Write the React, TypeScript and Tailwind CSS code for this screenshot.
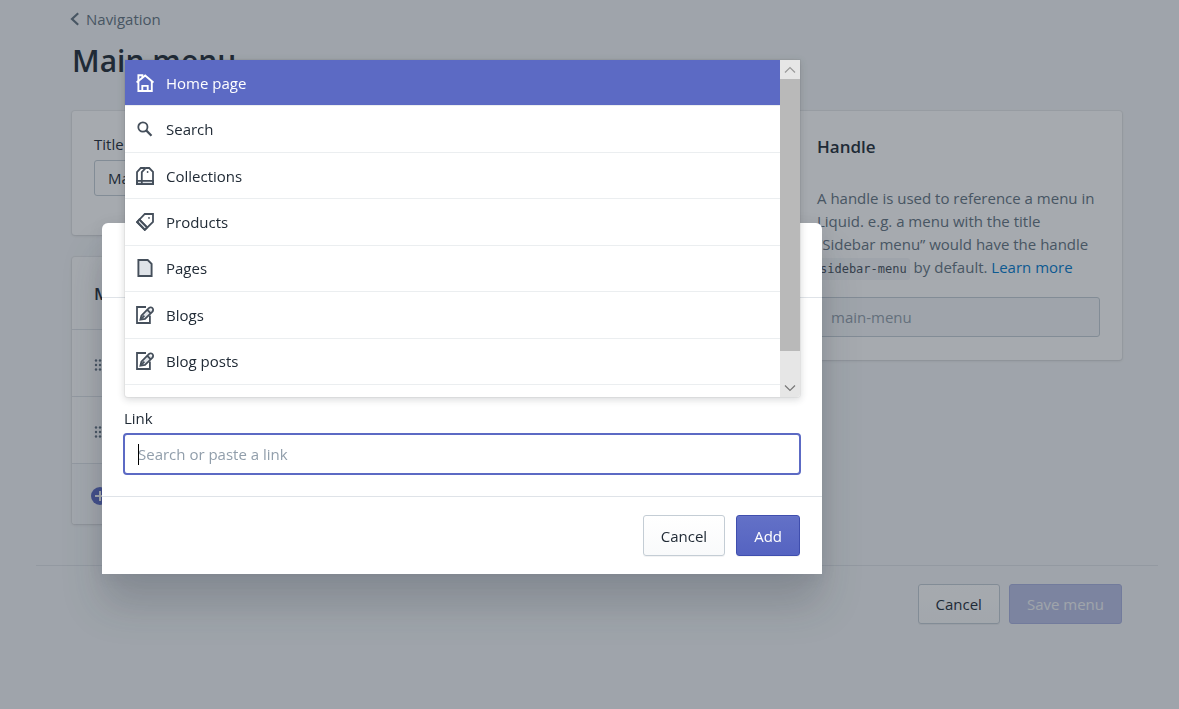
import { useState } from "react";
import type { ReactNode } from "react";

type LinkOption = {
  id: string;
  label: string;
  icon: ReactNode;
};

const HomeIcon = (
  <g fill="none" stroke="currentColor" strokeWidth="1.9">
    <path d="M2.4 7v10h13.4V7" />
    <path d="M.6 8.6 9.2 1.5l8.2 7.1" />
    <path d="M2.4 7V1.2h4v2.4" />
    <path d="M6.3 17v-5.1h5.4V17" />
  </g>
);

const SearchIcon = (
  <g fill="none" stroke="currentColor" strokeWidth="1.8">
    <circle cx="6.9" cy="7" r="4.6" />
    <path d="m10.2 10.4 5.3 5.3" strokeWidth="2.2" />
  </g>
);

const CollectionsIcon = (
  <g stroke="currentColor" strokeWidth="1.8" fill="none">
    <path d="M1 13.8h16v3.3H1z" fill="#dfe3e8" />
    <path d="M5.8 17.1V5.2L9.8 1h3.4L17 4.8v12.3z" />
    <path d="M5.8 17.1H1V5.2L4.8 1H9" />
    <circle cx="11.6" cy="5" r=".9" fill="currentColor" stroke="none" />
  </g>
);

const ProductsIcon = (
  <g stroke="currentColor" strokeWidth="1.8" fill="none">
    <path d="m3.4 6.4 7.8 8-2.4 2.4L1.1 9z" fill="#dfe3e8" />
    <path d="M1.1 9 8.8 1H17v7.9l-8.2 8z" />
    <path d="m3.3 6.6 8 8" />
    <circle cx="13" cy="4.9" r=".9" fill="currentColor" stroke="none" />
  </g>
);

const PagesIcon = (
  <path
    d="M2.4 1h9.3l3.9 3.9V17H2.4z"
    fill="#dfe3e8"
    stroke="currentColor"
    strokeWidth="1.9"
  />
);

const BlogIcon = (
  <g stroke="currentColor" strokeWidth="1.8" fill="none">
    <path d="M10 1H1v16h12.9V9.6" />
    <path d="m4.4 13.6 1-4 6.9-7c1.3-1.4 3-1.6 4.1-.5s.9 2.8-.4 4.1l-7 6.6z" fill="#dfe3e8" />
    <path d="m11.2 3.8 3.4 3.4M4.6 13.4 8.4 9.6" />
    <circle cx="15" cy="3.3" r=".9" fill="#fff" stroke="none" />
  </g>
);

const LINK_OPTIONS: LinkOption[] = [
  { id: "home", label: "Home page", icon: HomeIcon },
  { id: "search", label: "Search", icon: SearchIcon },
  { id: "collections", label: "Collections", icon: CollectionsIcon },
  { id: "products", label: "Products", icon: ProductsIcon },
  { id: "pages", label: "Pages", icon: PagesIcon },
  { id: "blogs", label: "Blogs", icon: BlogIcon },
  { id: "blog-posts", label: "Blog posts", icon: BlogIcon },
];

const CARD =
  "rounded-[3px] bg-white shadow-[0_0_0_1px_rgba(63,63,68,0.05),0_1px_3px_0_rgba(63,63,68,0.15)]";

const BUTTON =
  "rounded-[3px] border border-[#c4cdd5] bg-linear-to-b from-white to-[#f9fafb] px-[17px] text-[#212b36] shadow-[0_1px_0_0_rgba(22,29,37,0.05)]";

function GripIcon() {
  return (
    <svg viewBox="0 0 10 12" className="h-3 w-2.5 text-[#637381]" fill="currentColor">
      {[2, 6, 10].map((x) =>
        [1.5, 6, 10.5].map((y) => <circle key={`${x}-${y}`} cx={x} cy={y} r="1.2" />),
      )}
    </svg>
  );
}

function MenuPage() {
  return (
    <div className="pl-9 pr-[21px]">
      <header className="px-9 pt-[7px]">
        <a href="#navigation" className="flex items-center text-[#637381]">
          <svg viewBox="0 0 10 14" className="-ml-0.5 mr-1.5 h-3.5 w-2.5" fill="none">
            <path d="M8.2 1.2 2 7l6.2 5.8" stroke="currentColor" strokeWidth="2.2" />
          </svg>
          Navigation
        </a>
        <h1 className="mt-3 text-[30px] leading-9 font-semibold">Main menu</h1>
      </header>

      <div className="mt-8 flex items-start gap-[22px] px-9">
        <div className="flex flex-1 flex-col gap-[22px]">
          <section className={`${CARD} px-[22px] pt-[21px] pb-[39px]`}>
            <label htmlFor="title" className="block">
              Title
            </label>
            <input
              id="title"
              defaultValue="Main menu"
              className="mt-1 block h-9 w-full rounded-[3px] border border-[#c4cdd5] bg-white px-[13px]"
            />
          </section>

          <section className={CARD}>
            <h2 className="px-[22px] pt-[25px] pb-[23px] text-[17px] leading-6 font-semibold">
              Menu items
            </h2>
            <ul>
              {[0, 1].map((row) => (
                <li
                  key={row}
                  className="flex h-[67px] items-center border-t border-[#dfe3e8] px-[22px] pt-1"
                >
                  <GripIcon />
                </li>
              ))}
            </ul>
            <div className="flex h-[61px] items-center rounded-b-[3px] border-t border-[#dfe3e8] bg-[#f9fafb] px-[19px] pt-1">
              <svg viewBox="0 0 18 18" className="h-[18px] w-[18px]">
                <circle cx="9" cy="9" r="9" fill="#5c6ac4" />
                <path d="M9 4v10M4 9h10" stroke="#fff" strokeWidth="2" />
              </svg>
            </div>
          </section>
        </div>

        <section className={`${CARD} w-[327px] px-[22px] pt-6 pb-[23px]`}>
          <h2 className="text-[17px] leading-6 font-semibold">Handle</h2>
          <p className="mt-7 leading-[23px] text-[#637381]">
            A handle is used to reference a menu in Liquid. e.g. a menu with the title “Sidebar
            menu” would have the handle{" "}
            <code className="rounded-[3px] bg-[#f4f6f8] px-[3px] py-1 font-['DejaVu_Sans_Mono',monospace] text-xs text-[#454f5b]">
              sidebar-menu
            </code>{" "}
            by default.{" "}
            <a href="#learn" className="text-[#007ace]">
              Learn more
            </a>
          </p>
          <input
            aria-label="Handle"
            defaultValue="main-menu"
            disabled
            className="mt-[18px] block h-10 w-full rounded-[3px] border border-[#c4cdd5] bg-[#f4f6f8] px-[13px] text-[#919eab]"
          />
        </section>
      </div>

      <footer className="mt-[41px] flex justify-end gap-[9px] border-t border-[#dfe3e8] px-9 py-[18px]">
        <button type="button" className={`${BUTTON} h-10`}>
          Cancel
        </button>
        <button
          type="button"
          disabled
          className="h-10 rounded-[3px] border border-[#a9b1e0] bg-[#bac0e6] px-[17px] text-[#f4f6f8]"
        >
          Save menu
        </button>
      </footer>
    </div>
  );
}

function ScrollBar() {
  return (
    <div aria-hidden="true" className="flex w-5 flex-col bg-[#e6e6e6]">
      <div className="flex h-[19px] items-center justify-center">
        <svg viewBox="0 0 12 8" className="h-2 w-3" fill="none" stroke="#9a9a9a">
          <path d="m1 6.5 5-5 5 5" strokeWidth="1.2" />
        </svg>
      </div>
      <div className="h-[272px] bg-[#b9b9b9]" />
      <div className="flex flex-1 items-end justify-center pb-[5px]">
        <svg viewBox="0 0 12 8" className="h-2 w-3" fill="none" stroke="#777777">
          <path d="m1 1.5 5 5 5-5" strokeWidth="1.2" />
        </svg>
      </div>
    </div>
  );
}

export default function App() {
  const [selected, setSelected] = useState("home");
  const [query, setQuery] = useState("");

  return (
    <div className="relative min-h-screen bg-[#f4f6f8] font-['Open_Sans',sans-serif] text-[15px] leading-6 text-[#212b36]">
      <MenuPage />

      <div className="fixed inset-0 bg-[#212b36]/40 pt-[223px] pl-[102px]">
        <div
          role="dialog"
          className="w-full max-w-[720px] rounded-t-md bg-white shadow-[0_31px_41px_0_rgba(32,42,53,0.2),0_2px_16px_0_rgba(32,42,54,0.08)]"
        >
          <div className="h-[75px] border-b border-[#dfe3e8]" />

          <div className="relative px-[22px] pt-[108px] pb-[21px]">
            <label htmlFor="link" className="block">
              Link
            </label>
            <div className="relative -mx-px mt-[3px] flex items-center">
              <input
                id="link"
                value={query}
                onChange={(e) => setQuery(e.target.value)}
                placeholder="Search or paste a link"
                className="h-[42px] w-full rounded-[4px] border-2 border-[#5c6ac4] bg-white px-[13px] outline-none placeholder:text-[#919eab]"
              />
              <span className="absolute left-[15px] h-[21px] w-px bg-black" />
            </div>

            {/* Link type suggestions */}
            <div className="absolute right-[22px] bottom-[99px] left-[23px] flex h-[337px] overflow-hidden rounded-b-[3px] bg-white shadow-[0_0_0_1px_rgba(39,44,48,0.05),0_2px_7px_1px_rgba(39,44,48,0.16)]">
              <ul className="grid h-[325px] flex-1 grid-rows-7">
                {LINK_OPTIONS.map((opt) => (
                  <li key={opt.id} className="flex border-b border-[#ebeef0]">
                    <button
                      type="button"
                      onClick={() => setSelected(opt.id)}
                      className={`flex w-full items-center gap-3 px-[11px] text-left ${
                        selected === opt.id ? "bg-[#5c6ac4] text-white" : "bg-white"
                      }`}
                    >
                      <svg
                        viewBox="0 0 18 18"
                        className={`h-[18px] w-[18px] ${
                          selected === opt.id ? "text-white" : "text-[#454f5b]"
                        }`}
                      >
                        {opt.icon}
                      </svg>
                      {opt.label}
                    </button>
                  </li>
                ))}
              </ul>
              <ScrollBar />
            </div>
          </div>

          <div className="flex justify-end gap-[11px] border-t border-[#dfe3e8] px-[22px] py-[18px]">
            <button type="button" className={`${BUTTON} h-[41px]`}>
              Cancel
            </button>
            <button
              type="button"
              className="h-[41px] rounded-[3px] border border-[#3f4eae] bg-linear-to-b from-[#6371c7] to-[#5563c1] px-[17px] text-white shadow-[inset_0_1px_0_0_#6774c8,0_1px_0_0_rgba(22,29,37,0.05)]"
            >
              Add
            </button>
          </div>
        </div>
      </div>
    </div>
  );
}
